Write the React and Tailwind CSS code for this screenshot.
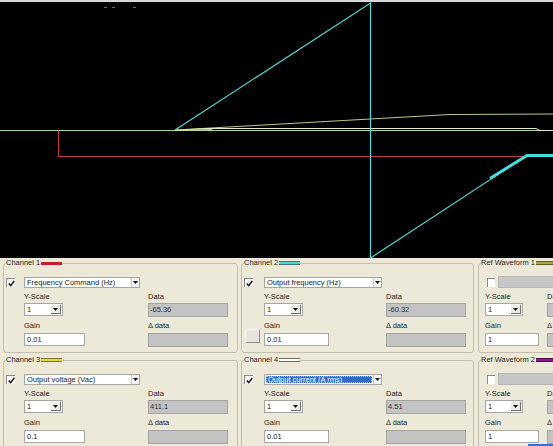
import React from 'react'

const Check = () => (
  <svg width="7" height="7" viewBox="0 0 7 7">
    <path d="M0.8 3.4 L2.7 5.6 L6.3 1" fill="none" stroke="#1a1a1a" strokeWidth="1.5" />
  </svg>
)

const Arrow = () => (
  <svg width="5" height="3" viewBox="0 0 5 3">
    <path d="M0 0H5L2.5 3Z" fill="#111" />
  </svg>
)

const Checkbox = ({ checked }) => (
  <span className="flex h-[9px] w-[9px] shrink-0 items-center justify-center border-l border-t border-[#8c8c8c] bg-[#f6f6f6]">
    {checked && <Check />}
  </span>
)

const ChannelSelect = ({ label, width, active }) => (
  <div className={`flex h-[11px] items-stretch border border-[#a6a6a6] bg-white ${width}`}>
    <div className="flex flex-1 items-center p-[1px]">
      {active ? (
        <span className="flex h-full flex-1 items-center border border-dotted border-[#a9c0ee] bg-[#316ac5] pl-[1px] text-white">
          {label}
        </span>
      ) : (
        <span className="pl-[1px]">{label}</span>
      )}
    </div>
    <span className="flex w-[8px] items-center justify-center border-l border-[#c8c8c8] bg-[#f2f2f2]">
      <Arrow />
    </span>
  </div>
)

const ScaleSelect = ({ width }) => (
  <div className={`flex h-[13px] items-stretch border border-[#a6a6a6] bg-white ${width}`}>
    <span className="flex flex-1 items-center pl-[2px]">1</span>
    <span className="m-[1px] flex w-[10px] items-center justify-center border-b border-r border-[#6f6f6f] border-l-white border-t-white bg-[#ecebe6]">
      <Arrow />
    </span>
  </div>
)

const DataField = ({ value }) => (
  <div className="flex h-[14px] w-[80px] items-center border border-[#a4a4a4] bg-[#c3c3c3] pl-[1px] text-[#333]">
    {value}
  </div>
)

const TextInput = ({ value, width }) => (
  <div className={`flex h-[13px] items-center border border-[#a8a8a8] bg-white pl-[2px] ${width}`}>
    {value}
  </div>
)

const Legend = ({ title, swatch }) => (
  <legend className="ml-[2px] flex items-center leading-[10px]">
    {title}
    <span className={`ml-[1px] box-content w-[21px] ${swatch}`} />
  </legend>
)

const ChannelGroup = ({ title, swatch, width, gap, cols, dropW, gainW, signal, data, gain, active, extraButton }) => (
  <fieldset className={`shrink-0 rounded-[3px] border border-[#c2bfae] ${width}`}>
    <Legend title={title} swatch={swatch} />
    <div className={`mt-[9px] flex h-[11px] items-center pl-[2px] ${gap}`}>
      <Checkbox checked />
      <ChannelSelect label={signal} width={dropW} active={active} />
    </div>
    <div className={`grid pb-[5px] ${cols}`}>
      <span />
      <span className="mt-[4px] h-[10px] leading-[10px]">Y-Scale</span>
      <span className="mt-[4px] h-[10px] leading-[10px]">Data</span>
      <span />
      <div className="mt-[1px]">
        <ScaleSelect width="w-[39px]" />
      </div>
      <div className="mt-[1px]">
        <DataField value={data} />
      </div>
      <span />
      <span className="mt-[4px] h-[10px] leading-[10px]">Gain</span>
      <span className="mt-[4px] h-[10px] leading-[10px]">Δ data</span>
      <div className="flex items-start pl-[3px]">
        {extraButton && (
          <span className="-mt-[2px] h-[14px] w-[15px] border border-[#8e8e8e] border-l-white border-t-white bg-[#e6e4dc]" />
        )}
      </div>
      <div className="mt-[2px]">
        <TextInput value={gain} width={gainW} />
      </div>
      <div className="mt-[2px]">
        <DataField value="" />
      </div>
    </div>
  </fieldset>
)

const RefGroup = ({ title, swatch, tail }) => (
  <fieldset className="w-[120px] shrink-0 rounded-[3px] border border-[#c2bfae]">
    <Legend title={title} swatch={swatch} />
    <div className="mt-[8px] flex h-[12px] items-center gap-[3px] pl-[8px]">
      <span className="h-[9px] w-[8px] shrink-0 border-l border-t border-[#8c8c8c] bg-white" />
      <span className="h-[12px] flex-1 border border-[#b4b4b4] bg-[#c6c6c6]" />
    </div>
    <div className={`grid grid-cols-[62px_80px] pl-[6px] ${tail ? 'pb-0' : 'pb-[5px]'}`}>
      <span className="mt-[4px] h-[10px] leading-[10px]">Y-Scale</span>
      <span className="mt-[4px] h-[10px] leading-[10px]">Data</span>
      <div className="mt-[1px]">
        <ScaleSelect width="w-[38px]" />
      </div>
      <div className="mt-[1px]">
        <DataField value="" />
      </div>
      <span className="mt-[4px] h-[10px] leading-[10px]">Gain</span>
      <span className="mt-[4px] h-[10px] leading-[10px]">Δ data</span>
      <div className="mt-[2px]">
        <TextInput value="1" width="w-[54px]" />
      </div>
      <div className="mt-[2px]">
        <DataField value="" />
      </div>
    </div>
    {tail && <div className="ml-[49px] h-[8px] bg-[#3b6fd4]" />}
  </fieldset>
)

const Scope = () => (
  <svg width="553" height="258" viewBox="0 0 553 258" className="block">
    <rect width="553" height="258" fill="#000" />
    <rect width="553" height="2" fill="#d8d8d8" />
    <rect x="104" y="7" width="3" height="1" fill="#6a6a6a" />
    <rect x="112" y="7" width="3" height="1" fill="#6a6a6a" />
    <rect x="133" y="7" width="3" height="1" fill="#6a6a6a" />
    <line x1="0" y1="130.5" x2="553" y2="130.5" stroke="#a9d6a6" strokeWidth="1" />
    <polyline points="58.5,130.5 58.5,156.5 553,156.5" fill="none" stroke="#c43a46" strokeWidth="1" />
    <polyline points="175,130 450,114.5 553,114" fill="none" stroke="#c4c28a" strokeWidth="1" />
    <polyline points="175,130.5 205,128.5 536,128.5 540,130.5 553,130.5" fill="none" stroke="#e8e8cc" strokeWidth="1" />
    <line x1="176" y1="130" x2="212" y2="129.6" stroke="#c8e66a" strokeWidth="1" />
    <polyline points="175,130 370.5,3 370.5,258 527,155.5 553,155.5" fill="none" stroke="#52dada" strokeWidth="1.2" />
    <polyline points="490,178.5 527,155.5 553,155.5" fill="none" stroke="#3fe2e2" strokeWidth="3" />
  </svg>
)

export default function App() {
  return (
    <div className="h-[446px] w-[553px] overflow-hidden bg-[#ece9d8] font-['Liberation_Sans',Arial,sans-serif] text-[7.5px] text-[#222]">
      <Scope />
      <div className="flex gap-[3px] pl-[3px]">
        <ChannelGroup
          title="Channel 1"
          swatch="h-[3px] bg-[#c41e2e]"
          width="w-[235px]"
          gap="gap-[9px]"
          cols="grid-cols-[20px_124px_80px]"
          dropW="w-[116px]"
          gainW="w-[61px]"
          signal="Frequency Command (Hz)"
          data="-65.36"
          gain="0.01"
        />
        <ChannelGroup
          title="Channel 2"
          swatch="h-[2px] border-y border-[#4f7474] bg-[#4cd4d4]"
          width="w-[233px]"
          gap="gap-[11px]"
          cols="grid-cols-[22px_122px_80px]"
          dropW="w-[118px]"
          gainW="w-[65px]"
          signal="Output frequency (Hz)"
          data="-60.32"
          gain="0.01"
          extraButton
        />
        <div className="pl-[1px]">
          <RefGroup title="Ref Waveform 1" swatch="h-[2px] border-y border-[#5e5e2a] bg-[#a8a848]" />
        </div>
      </div>
      <div className="mt-[2px] flex gap-[3px] pl-[3px]">
        <ChannelGroup
          title="Channel 3"
          swatch="h-[2px] border-y border-[#7e7630] bg-[#e4d640]"
          width="w-[235px]"
          gap="gap-[9px]"
          cols="grid-cols-[20px_124px_80px]"
          dropW="w-[116px]"
          gainW="w-[61px]"
          signal="Output voltage (Vac)"
          data="411.1"
          gain="0.1"
        />
        <ChannelGroup
          title="Channel 4"
          swatch="h-[2px] border-y border-[#6a6a6a] bg-white"
          width="w-[233px]"
          gap="gap-[11px]"
          cols="grid-cols-[22px_122px_80px]"
          dropW="w-[118px]"
          gainW="w-[65px]"
          signal="Output current (A rms)"
          data="4.51"
          gain="0.01"
          active
        />
        <div className="pl-[1px]">
          <RefGroup title="Ref Waveform 2" swatch="h-[2px] border-y border-[#4a104a] bg-[#8a1a8a]" tail />
        </div>
      </div>
    </div>
  )
}
